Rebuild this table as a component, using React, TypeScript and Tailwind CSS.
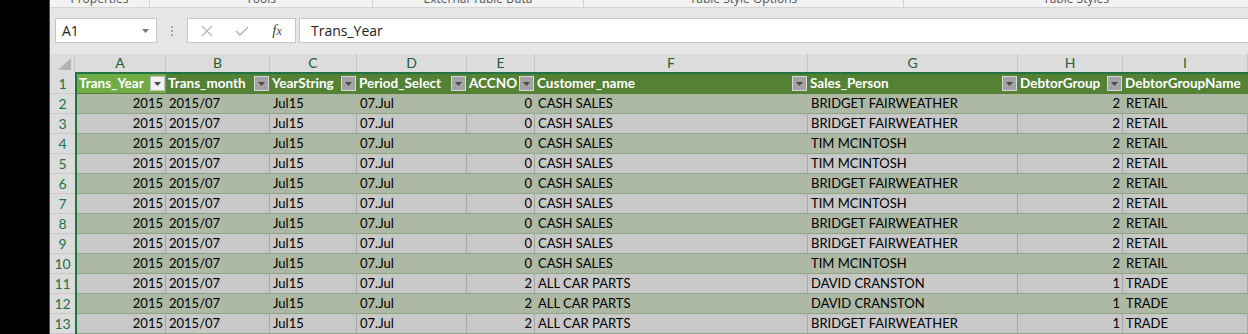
import React from "react";

type Col = { w: string; right?: boolean };

const COLS: Col[] = [
  { w: "w-[89px]", right: true },
  { w: "w-[104px]" },
  { w: "w-[87px]" },
  { w: "w-[110px]" },
  { w: "w-[68px]", right: true },
  { w: "w-[273px]" },
  { w: "w-[210px]" },
  { w: "w-[105px]", right: true },
  { w: "flex-1" },
];

const LETTERS = [
  { l: "A", w: "w-[91px]" },
  { l: "B", w: "w-[104px]" },
  { l: "C", w: "w-[87px]" },
  { l: "D", w: "w-[110px]" },
  { l: "E", w: "w-[68px]" },
  { l: "F", w: "w-[273px]" },
  { l: "G", w: "w-[210px]" },
  { l: "H", w: "w-[105px]" },
  { l: "I", w: "flex-1" },
];

const HEADERS = [
  "Trans_Year",
  "Trans_month",
  "YearString",
  "Period_Select",
  "ACCNO",
  "Customer_name",
  "Sales_Person",
  "DebtorGroup",
  "DebtorGroupName",
];

const B = "BRIDGET FAIRWEATHER";
const T = "TIM MCINTOSH";
const D = "DAVID CRANSTON";

const ROWS: [number, string, string, number, string][] = [
  [0, "CASH SALES", B, 2, "RETAIL"],
  [0, "CASH SALES", B, 2, "RETAIL"],
  [0, "CASH SALES", T, 2, "RETAIL"],
  [0, "CASH SALES", T, 2, "RETAIL"],
  [0, "CASH SALES", B, 2, "RETAIL"],
  [0, "CASH SALES", T, 2, "RETAIL"],
  [0, "CASH SALES", B, 2, "RETAIL"],
  [0, "CASH SALES", B, 2, "RETAIL"],
  [0, "CASH SALES", T, 2, "RETAIL"],
  [2, "ALL CAR PARTS", D, 1, "TRADE"],
  [2, "ALL CAR PARTS", D, 1, "TRADE"],
  [2, "ALL CAR PARTS", B, 1, "TRADE"],
];

function FilterBtn({ active }: { active?: boolean }) {
  return (
    <div
      className={`w-[15px] h-[15px] shrink-0 flex items-center justify-center border ${
        active ? "bg-[#f2f2f2] border-[#bfbfbf]" : "bg-[#a3a3a3] border-[#d9d9d9]"
      }`}
    >
      <svg width="7" height="4" viewBox="0 0 7 4">
        <path d="M0 0 L7 0 L3.5 4 Z" fill="#4a4a4a" />
      </svg>
    </div>
  );
}

function RibbonGroup({ label, w }: { label: string; w: string }) {
  return (
    <div className={`${w} h-full flex justify-center border-r border-[#d4d4d4] last:border-r-0 overflow-hidden`}>
      <span className="text-[12px] leading-[14px] mt-[-8px] text-[#555] font-['Open_Sans',sans-serif]">{label}</span>
    </div>
  );
}

export default function App() {
  return (
    <div className="w-[1248px] h-[334px] flex overflow-hidden bg-black font-['Lato',sans-serif]">
      <div className="w-[49px] shrink-0 bg-black" />
      <div className="w-px shrink-0 bg-[#1e6b3c]" />

      <div className="flex-1 flex flex-col bg-[#e6e6e6] min-w-0">
        {/* ribbon group labels, cut off */}
        <div className="h-[8px] shrink-0 flex bg-[#f3f3f3] border-b border-[#d5d5d5]">
          <RibbonGroup label="Properties" w="w-[100px]" />
          <RibbonGroup label="Tools" w="w-[223px]" />
          <RibbonGroup label="External Table Data" w="w-[211px]" />
          <RibbonGroup label="Table Style Options" w="w-[320px]" />
          <RibbonGroup label="Table Styles" w="flex-1" />
        </div>

        {/* formula bar */}
        <div className="h-[25px] mt-[10px] shrink-0 flex items-stretch pl-[5px]">
          <div className="w-[102px] bg-white border border-[#c6c6c6] flex items-center justify-between pl-[6px] pr-[7px]">
            <span className="text-[14px] text-[#222] font-['Open_Sans',sans-serif]">A1</span>
            <svg width="7" height="4" viewBox="0 0 7 4">
              <path d="M0 0 L7 0 L3.5 4 Z" fill="#777" />
            </svg>
          </div>
          <div className="w-[30px] flex flex-col items-center justify-center gap-[2px]">
            <div className="w-[2px] h-[2px] bg-[#a8a8a8]" />
            <div className="w-[2px] h-[2px] bg-[#a8a8a8]" />
            <div className="w-[2px] h-[2px] bg-[#a8a8a8]" />
          </div>
          <div className="w-[109px] bg-white border border-[#c6c6c6] flex items-center">
            <div className="w-[37px] flex justify-center">
              <svg width="12" height="12" viewBox="0 0 12 12">
                <path d="M1 1 L11 11 M11 1 L1 11" stroke="#b8b8b8" strokeWidth="1.4" />
              </svg>
            </div>
            <div className="w-[34px] flex justify-center">
              <svg width="14" height="12" viewBox="0 0 14 12">
                <path d="M1 6 L5 10 L13 2" stroke="#b8b8b8" strokeWidth="1.6" fill="none" />
              </svg>
            </div>
            <div className="flex-1 flex justify-center">
              <span className="text-[15px] italic text-[#444] font-['Liberation_Serif',serif]">
                f<span className="text-[12px]">x</span>
              </span>
            </div>
          </div>
          <div className="flex-1 ml-[3px] bg-white border border-[#c6c6c6] border-r-0 flex items-center pl-[11px]">
            <span className="text-[14px] text-[#222] font-['Open_Sans',sans-serif]">Trans_Year</span>
          </div>
        </div>

        {/* column letters */}
        <div className="h-[18px] mt-[11px] shrink-0 flex bg-[#dcdcdc]">
          <div className="w-[25px] shrink-0 flex items-end justify-end pr-[3px] pb-[2px] border-r border-[#c4c4c4]">
            <svg width="13" height="12" viewBox="0 0 13 12">
              <path d="M13 0 L13 12 L0 12 Z" fill="#b4b4b4" />
            </svg>
          </div>
          {LETTERS.map((c) => (
            <div
              key={c.l}
              className={`${c.w} shrink-0 flex items-center justify-center border-r border-[#c4c4c4] text-[14px] leading-[18px] text-[#235d3a]`}
            >
              {c.l}
            </div>
          ))}
        </div>

        {/* sheet body */}
        <div className="flex-1 flex min-h-0">
          <div className="w-[25px] shrink-0 flex flex-col pt-[2px] bg-[#dcdcdc]">
            {Array.from({ length: 13 }, (_, i) => (
              <div
                key={i}
                className="h-[20px] shrink-0 flex items-center justify-center border-b border-[#cacaca] text-[14px] text-[#217346]"
              >
                {i + 1}
              </div>
            ))}
          </div>
          <div className="flex-1 flex flex-col border-l-2 border-t-2 border-[#217346] min-w-0">
            {/* header row */}
            <div className="h-[20px] shrink-0 flex bg-[#548235] border-b border-[#548235]">
              {HEADERS.map((h, i) => (
                <div
                  key={h}
                  className={`${COLS[i].w} shrink-0 flex items-center justify-between gap-[2px] pl-[2px] pr-[1px] overflow-hidden ${
                    i === 0 ? "bg-[#70ad47]" : ""
                  }`}
                >
                  <span className="text-[13.5px] font-bold text-white whitespace-nowrap">{h}</span>
                  {i < 8 && <FilterBtn active={i === 0} />}
                </div>
              ))}
            </div>
            {/* data rows */}
            {ROWS.map((r, ri) => {
              const green = ri % 2 === 0;
              const bg = green ? "bg-[#adb9a5]" : "bg-[#c8c8c8]";
              const vl = green ? "border-r-[#adb9a5]" : "border-r-[#a6a6a6]";
              const vals = ["2015", "2015/07", "Jul15", "07.Jul", String(r[0]), r[1], r[2], String(r[3]), r[4]];
              return (
                <div key={ri} className={`h-[20px] shrink-0 flex ${bg} border-b border-[#8ea581]`}>
                  {vals.map((v, ci) => (
                    <div
                      key={ci}
                      className={`${COLS[ci].w} shrink-0 flex items-center border-r ${vl} text-[13px] text-black whitespace-nowrap overflow-hidden ${
                        COLS[ci].right ? "justify-end pr-[2px]" : "pl-[3px]"
                      }`}
                    >
                      {v}
                    </div>
                  ))}
                </div>
              );
            })}
          </div>
        </div>
      </div>
    </div>
  );
}
